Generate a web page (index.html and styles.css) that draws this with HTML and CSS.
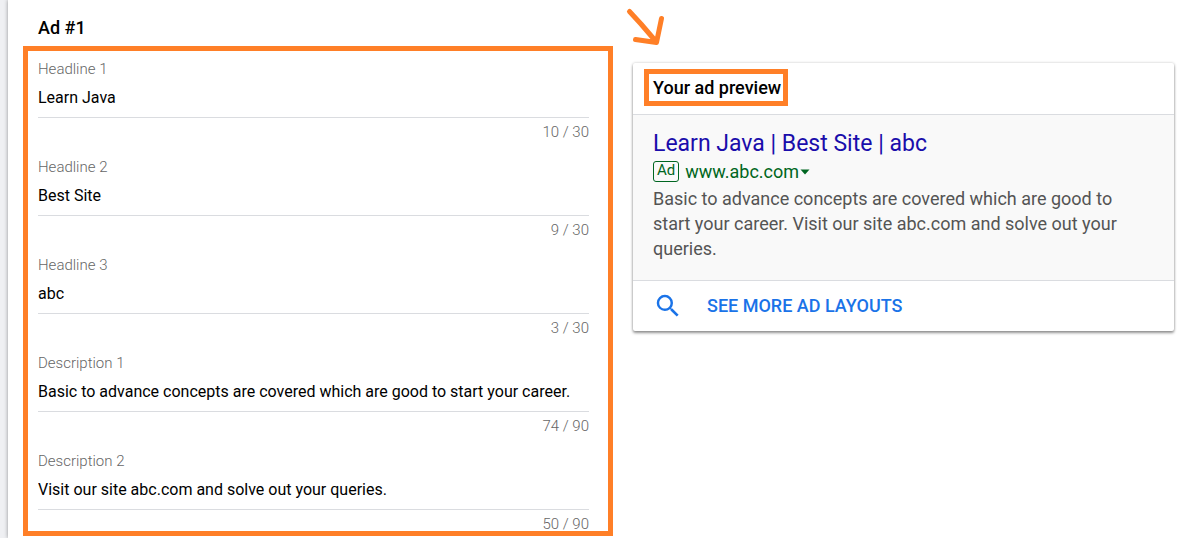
FILE: index.html
```html
<!DOCTYPE html>
<html lang="en">
<head>
<meta charset="utf-8">
<title>Ad #1</title>
<link rel="stylesheet" href="styles.css">
</head>
<body>
<div class="backdrop">
<main class="sheet">
  <form class="editor">
    <h2 class="editor-title">Ad #1</h2>
    <div class="fields">
      <div class="field">
        <label class="field-label" for="h1">Headline 1</label>
        <input class="field-input" id="h1" type="text" value="Learn Java">
        <span class="field-count">10 / 30</span>
      </div>
      <div class="field">
        <label class="field-label" for="h2">Headline 2</label>
        <input class="field-input" id="h2" type="text" value="Best Site">
        <span class="field-count">9 / 30</span>
      </div>
      <div class="field">
        <label class="field-label" for="h3">Headline 3</label>
        <input class="field-input" id="h3" type="text" value="abc">
        <span class="field-count">3 / 30</span>
      </div>
      <div class="field">
        <label class="field-label" for="d1">Description 1</label>
        <input class="field-input" id="d1" type="text" value="Basic to advance concepts are covered which are good to start your career.">
        <span class="field-count">74 / 90</span>
      </div>
      <div class="field">
        <label class="field-label" for="d2">Description 2</label>
        <input class="field-input" id="d2" type="text" value="Visit our site abc.com and solve out your queries.">
        <span class="field-count">50 / 90</span>
      </div>
    </div>
  </form>
  <aside class="side">
    <svg class="arrow" width="50" height="50" viewBox="620 0 50 50" aria-hidden="true">
      <path d="M629.500 11.500L641 24L656 41.500M661.500 18.500L656.500 42.500L635.500 39.500"/>
    </svg>
    <section class="card">
      <header class="card-head">
        <h2 class="card-title">Your ad preview</h2>
      </header>
      <div class="ad">
        <a class="ad-headline" href="#">Learn Java | Best Site | abc</a>
        <div class="ad-url">
          <span class="ad-badge">Ad</span>
          <span class="ad-domain">www.abc.com</span>
          <svg class="caret" width="10" height="6" viewBox="0 0 10 6" aria-hidden="true"><path d="M0.500 0.500H9.500L5 5.500Z"/></svg>
        </div>
        <p class="ad-text">Basic to advance concepts are covered which are good to start your career. Visit our site abc.com and solve out your queries.</p>
      </div>
      <button class="more" type="button">
        <svg class="search" width="30" height="30" viewBox="0 0 24 24" aria-hidden="true"><path d="M15.500 14h-.79l-.28-.27A6.471 6.471 0 0 0 16 9.500 6.500 6.500 0 1 0 9.500 16c1.610 0 3.090-.59 4.230-1.570l.27.28v.79l5 4.990L20.490 19l-4.990-5zm-6 0C7.010 14 5 11.990 5 9.500S7.010 5 9.500 5 14 7.010 14 9.500 11.990 14 9.500 14z"/></svg>
        <span>SEE MORE AD LAYOUTS</span>
      </button>
    </section>
  </aside>
</main>
</div>
</body>
</html>
```

FILE: styles.css
```css
* {
  box-sizing: border-box;
}

body {
  margin: 0;
  background: #fff;
  color: #000;
  font-family: Roboto, "Liberation Sans", sans-serif;
}

.backdrop {
  padding-left: 8px;
  background: #eff0f3;
}

.sheet {
  display: grid;
  grid-template-columns: minmax(0, 590fr) minmax(0, 541fr);
  column-gap: 20px;
  padding: 0 6px 2px 15px;
  background: #fff;
  box-shadow: 0 0 4px rgba(0, 0, 0, 0.4);
  clip-path: inset(0 0 0 -8px);
}

.editor-title {
  margin: 0;
  padding: 16px 15px 6px;
  font-size: 18px;
  line-height: 24px;
  font-weight: 500;
}

.fields {
  padding: 8px 19px 0 10px;
  border: 5px solid #ff7f27;
}

.field {
  display: flex;
  flex-direction: column;
  height: 98px;
}

.field:last-child {
  height: 80px;
}

.field-label {
  flex: none;
  font-size: 15px;
  line-height: 20px;
  font-weight: 300;
  color: #666;
}

.field-input {
  flex: none;
  width: 100%;
  height: 39px;
  padding: 0 0 2px;
  border: 0;
  border-bottom: 1px solid #dadce0;
  outline: 0;
  background: transparent;
  color: #000;
  font: 400 16px/20px Roboto, "Liberation Sans", sans-serif;
}

.field-count {
  flex: none;
  padding-top: 4px;
  font-size: 15px;
  line-height: 20px;
  font-weight: 300;
  color: #666;
  text-align: right;
}

.side {
  padding-top: 63px;
  position: relative;
}

.arrow {
  position: absolute;
  top: 0;
  left: -13px;
  fill: none;
  stroke: #ff7f27;
  stroke-width: 5;
  stroke-linecap: round;
  stroke-linejoin: round;
}

.card {
  border-radius: 2px;
  background: #fff;
  box-shadow: 0 2px 3px rgba(0, 0, 0, 0.4), 0 0 3px rgba(0, 0, 0, 0.2);
}

.card-head {
  padding: 6px 11px 8px;
  border-bottom: 1px solid #dadce0;
}

.card-title {
  width: fit-content;
  margin: 0;
  padding: 2px 2px 1px 4px;
  border: 5px solid #ff7f27;
  font-size: 18px;
  line-height: 24px;
  font-weight: 500;
}

.ad {
  padding: 14px 40px 19px 20px;
  border-bottom: 1px solid #dadce0;
  background: #f9f9f9;
}

.ad-headline {
  display: block;
  font-size: 23px;
  line-height: 30px;
  color: #1a0dab;
  text-decoration: none;
}

.ad-url {
  display: flex;
  align-items: center;
  height: 27px;
  padding-bottom: 2px;
  color: #006621;
  font-size: 18px;
  line-height: 24px;
}

.ad-badge {
  margin-right: 6px;
  padding: 0 3px 2px;
  border: 1px solid #006621;
  border-radius: 3px;
  font-size: 15px;
  line-height: 17px;
}

.caret {
  margin-left: 1px;
  fill: #006621;
}

.ad-text {
  margin: 0;
  font-size: 18px;
  line-height: 25px;
  color: #545454;
}

.more {
  display: flex;
  align-items: center;
  gap: 24px;
  width: 100%;
  height: 50px;
  padding: 0 20px;
  border: 0;
  background: transparent;
  color: #1a73e8;
  font: 500 18px/24px Roboto, "Liberation Sans", sans-serif;
}

.search {
  fill: #1a73e8;
}
```
